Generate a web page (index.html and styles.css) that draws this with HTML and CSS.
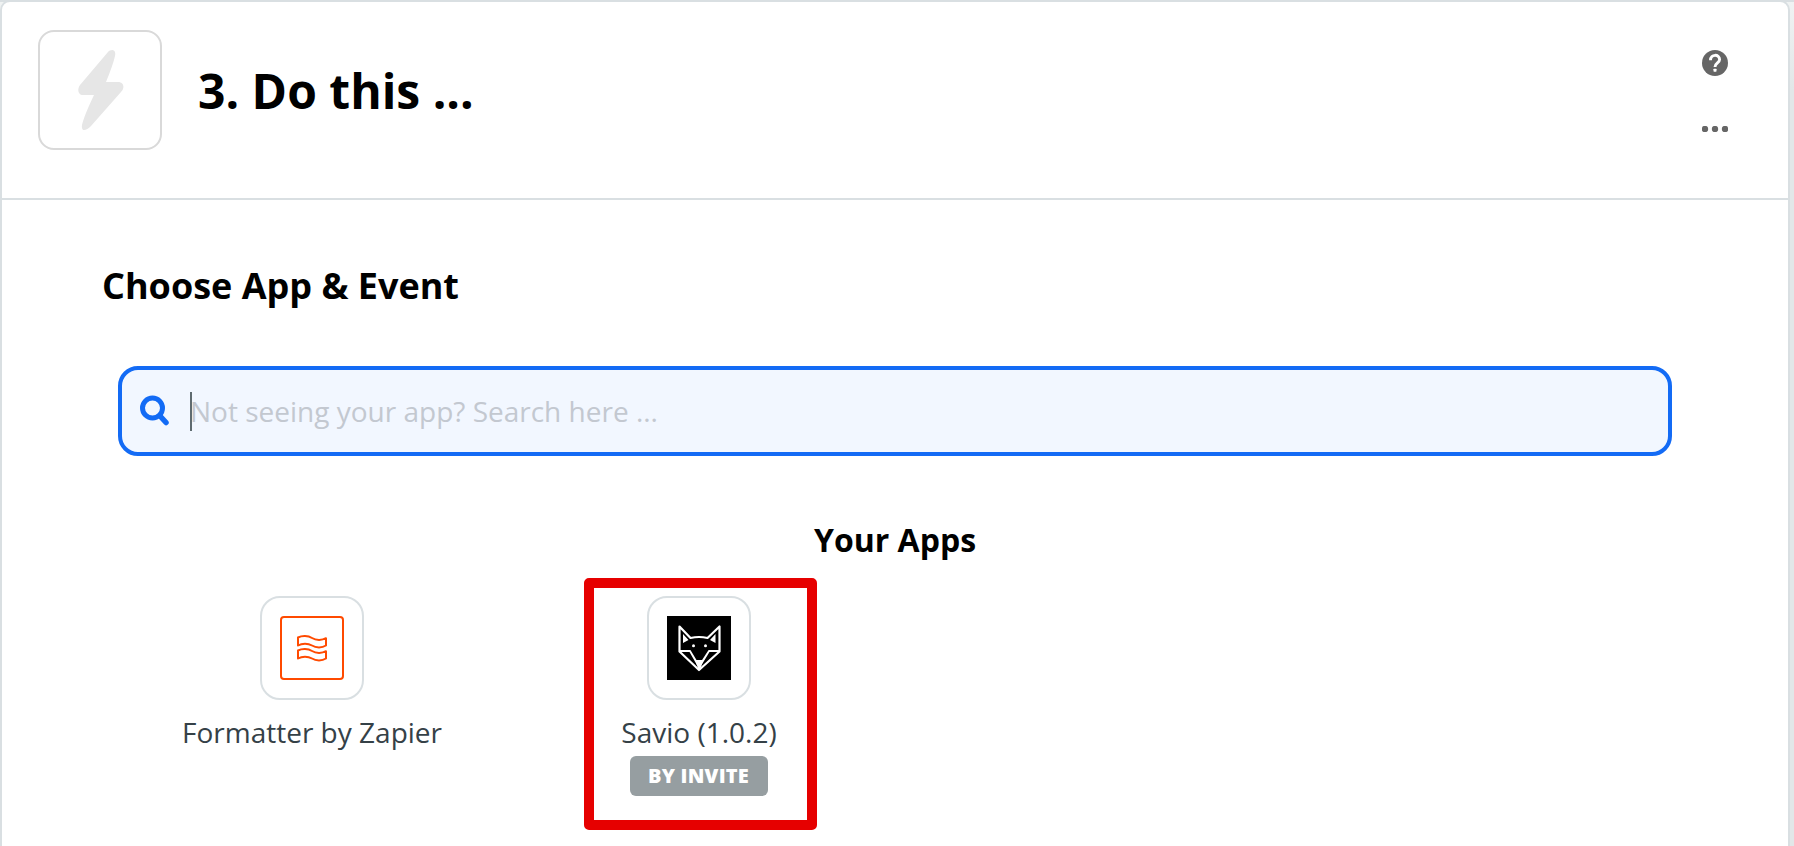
FILE: index.html
```html
<!DOCTYPE html>
<html lang="en">
<head>
<meta charset="utf-8">
<title>Choose App &amp; Event</title>
<link rel="stylesheet" href="styles.css">
</head>
<body>
<main class="card">
  <header class="header">
    <div class="step-icon">
      <svg width="46" height="80" viewBox="0 0 46 80"><path d="M30 2C33 -1 38.500 -1 37 6Q35 15 28 32H40C46 32 47 38 43 42L13 76C8 81 3 82 4 75Q6 66 16 45H5C0 45 -1 39 2 35Z" fill="#e6e6e6"/></svg>
    </div>
    <h1 class="title">3. Do this ...</h1>
    <div class="actions">
      <svg width="26" height="26" viewBox="0 0 26 26"><circle cx="13" cy="13" r="13" fill="#666"/><path d="M8.500 10.200C8.500 3.800 17.600 3.800 17.600 9.600C17.600 13 13 13 13 17" fill="none" stroke="#fff" stroke-width="2.900"/><rect x="11.500" y="18.700" width="3" height="3" rx=".6" fill="#fff"/></svg>
      <svg width="26" height="6" viewBox="0 0 26 6" fill="#666"><circle cx="3" cy="3" r="3.200"/><circle cx="13" cy="3" r="3.200"/><circle cx="23" cy="3" r="3.200"/></svg>
    </div>
  </header>
  <section class="content">
    <h2 class="heading">Choose App &amp; Event</h2>
    <div class="search">
      <svg width="30" height="32" viewBox="0 0 30 32" fill="none" stroke="#136bf5"><circle cx="12.500" cy="13" r="10" stroke-width="5"/><path d="M20.500 21.500L26 27.500" stroke-width="5.500" stroke-linecap="round"/></svg>
      <span class="caret"></span>
      <span class="placeholder">Not seeing your app? Search here ...</span>
    </div>
    <h3 class="apps-title">Your Apps</h3>
    <div class="apps">
      <div class="app">
        <div class="tile">
          <svg width="64" height="64" viewBox="0 0 64 64" fill="none" stroke="#ff4a00" stroke-width="2" stroke-linejoin="round"><rect x="1" y="1" width="62" height="62" rx="3"/><path d="M18 21.500C22 19.500 28 19.500 32 22C36 24.500 42 24.500 46 22.200V29.500C42 32 36 32 32 29.500C28 27 22 27 18 29.500Z"/><path d="M18 34.500C22 32.500 28 32.500 32 35C36 37.500 42 37.500 46 35.200V42.500C42 45 36 45 32 42.500C28 40 22 40 18 42.500Z"/></svg>
        </div>
        <div class="name">Formatter by Zapier</div>
      </div>
      <div class="app highlighted">
        <div class="tile">
          <svg width="64" height="64" viewBox="0 0 64 64"><rect width="64" height="64"/><g fill="none" stroke="#fff" stroke-width="2.200" stroke-linejoin="round"><path d="M12.500 10.500L23.500 22Q32 20 40.500 22L52.500 10.500V35.500L32 54L12.500 35.500Z"/><path d="M12.500 35H23L29 45H35.500L42 35H52.500M23 35L31 49M42 35L33.500 49" stroke-width="1.800"/></g><path d="M16 18L21.500 24L16 27ZM48.500 18L43 24L48.500 27ZM28.500 45H36L33 54H31.500Z" fill="#fff"/><circle cx="26.500" cy="29.800" r="1.500" fill="#fff"/><circle cx="38.500" cy="29.800" r="1.500" fill="#fff"/></svg>
        </div>
        <div class="name">Savio (1.0.2)</div>
        <div class="badge">BY INVITE</div>
      </div>
    </div>
  </section>
</main>
</body>
</html>
```
FILE: styles.css
```css
* { box-sizing: border-box; }
body {
  margin: 0;
  height: 846px;
  overflow: hidden;
  border-top: 2px solid #d9dfe2;
  background: linear-gradient(#f0f3f3, #e2e7e8 90px);
  font-family: "Open Sans", "Noto Sans", sans-serif;
  color: #000;
}
h1, h2, h3 { margin: 0; font-weight: 700; }
svg { display: block; }
.card {
  width: 1790px;
  height: 860px;
  margin-top: -2px;
  border: 2px solid #d9dfe2;
  border-radius: 10px;
  background: #fff;
}
.header {
  display: flex;
  align-items: flex-start;
  height: 198px;
  padding: 28px 60px 0 36px;
  border-bottom: 2px solid #d9dfe2;
}
.step-icon {
  display: grid;
  place-items: center;
  width: 124px;
  height: 120px;
  padding-left: 1px;
  border: 2px solid #d9d9d9;
  border-radius: 16px;
}
.title { margin-left: 36px; font-size: 48px; line-height: 122px; }
.actions { display: grid; gap: 50px; margin: 20px 0 0 auto; }
.content { padding: 62px 116px 0; }
.heading { margin-left: -16px; font-size: 36px; line-height: 48px; }
.search {
  display: flex;
  align-items: center;
  height: 90px;
  margin-top: 56px;
  padding-left: 18px;
  border: 4px solid #136bf5;
  border-radius: 20px;
  background: #f2f7ff;
}
.caret { width: 2px; height: 39px; margin-left: 20px; background: #5f6b70; }
.placeholder { margin-left: -2px; font-size: 28px; line-height: 40px; color: #c3c8d0; }
.apps-title { margin-top: 64px; font-size: 32px; line-height: 40px; text-align: center; }
.apps { display: grid; grid-template-columns: repeat(4, 387px); margin-top: 36px; }
.app { display: flex; flex-direction: column; align-items: center; position: relative; }
.tile {
  display: grid;
  place-items: center;
  width: 104px;
  height: 104px;
  border: 2px solid #d9dfe2;
  border-radius: 20px;
}
.name { margin: 12px -1px 0 0; font-size: 28px; line-height: 40px; color: #354147; }
.badge {
  width: 138px;
  height: 40px;
  margin-top: 4px;
  border-radius: 6px;
  background: #969ea1;
  color: #fff;
  font-size: 20px;
  font-weight: 800;
  line-height: 40px;
  letter-spacing: 0.2px;
  text-align: center;
}
.highlighted::after {
  content: "";
  box-sizing: border-box;
  position: absolute;
  top: -18px;
  left: 79px;
  width: 233px;
  height: 252px;
  border: 10px solid #e60000;
  border-radius: 5px;
}
```
